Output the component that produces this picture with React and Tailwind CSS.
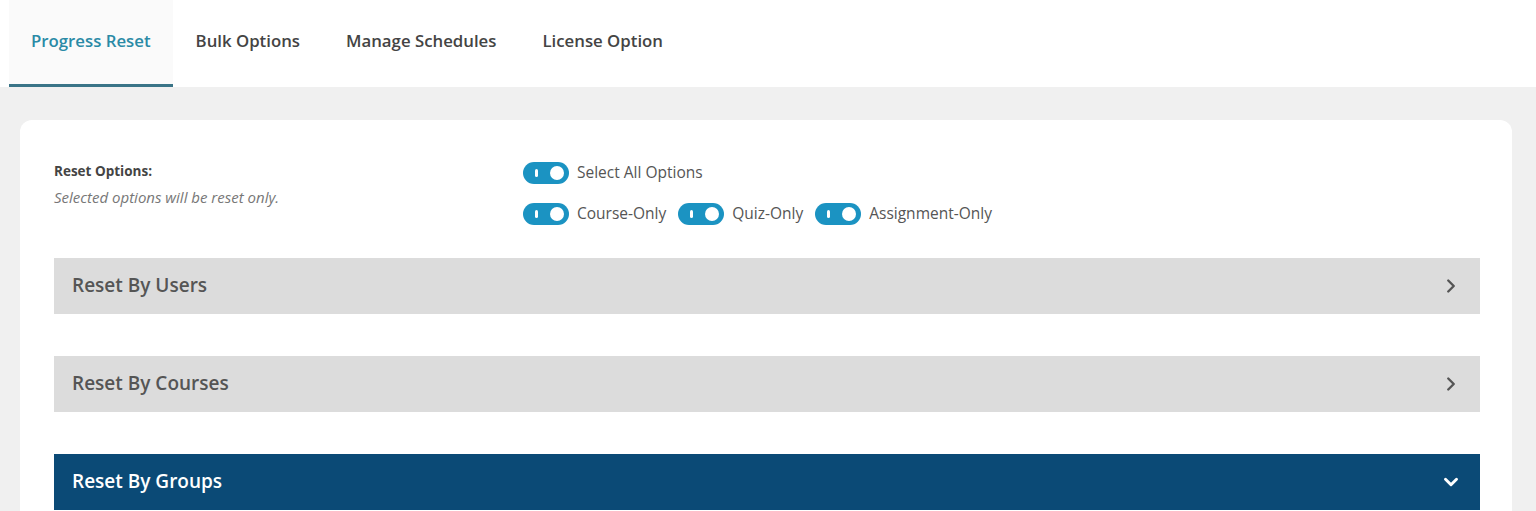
import { ChevronRight, ChevronDown } from 'lucide-react';

const tabs = ['Progress Reset', 'Bulk Options', 'Manage Schedules', 'License Option'];

function Toggle() {
  return (
    <span className="relative inline-flex items-center w-[46px] h-[22px] rounded-full bg-[#1b93c2] shrink-0">
      <span className="absolute left-[12px] top-[7px] w-[3px] h-[8px] rounded-sm bg-white" />
      <span className="absolute right-[5px] top-[4px] w-[14px] h-[14px] rounded-full bg-white" />
    </span>
  );
}

function Option({ label }) {
  return (
    <label className="flex items-center gap-[8px] text-[15.5px] text-[#555]">
      <Toggle />
      <span>{label}</span>
    </label>
  );
}

function Section({ title, open }) {
  return (
    <div
      className={
        open
          ? 'h-[56px] flex items-center justify-between pl-[18px] pr-[18px] bg-[#0b4a76] text-white'
          : 'h-[56px] flex items-center justify-between pl-[18px] pr-[18px] bg-[#dcdcdc] text-[#555]'
      }
    >
      <span className="text-[19px] font-semibold">{title}</span>
      {open ? (
        <ChevronDown className="w-[22px] h-[22px]" strokeWidth={3.2} />
      ) : (
        <ChevronRight className="w-[22px] h-[22px]" strokeWidth={2.6} />
      )}
    </div>
  );
}

export default function App() {
  return (
    <div className="min-h-screen bg-[#f0f0f0] font-['Open_Sans',sans-serif]">
      <div className="bg-white h-[87px] flex items-stretch pl-[9px]">
        {tabs.map((t, i) => (
          <div
            key={t}
            className={
              i === 0
                ? 'px-[22px] flex items-center bg-[#fafafa] border-b-[3px] border-[#3a7487] text-[#2a8aa6] text-[16.8px] font-semibold pb-[2px]'
                : 'px-[23px] flex items-center text-[#444] text-[16.8px] font-semibold pb-[2px] border-b-[3px] border-transparent'
            }
          >
            {t}
          </div>
        ))}
      </div>

      <div className="mt-[33px] ml-[20px] mr-[24px] bg-white rounded-[12px] pt-[41px] pl-[34px] pr-[32px] pb-[20px]">
        <div className="flex">
          <div className="w-[469px]">
            <div className="text-[13.5px] font-bold text-[#444] leading-[20px]">Reset Options:</div>
            <div className="text-[15px] italic text-[#777] leading-[20px] mt-[6px]">
              Selected options will be reset only.
            </div>
          </div>
          <div className="flex flex-col gap-[18px]">
            <Option label="Select All Options" />
            <div className="flex items-center gap-[12px]">
              <Option label="Course-Only" />
              <Option label="Quiz-Only" />
              <Option label="Assignment-Only" />
            </div>
          </div>
        </div>

        <div className="mt-[32px] flex flex-col gap-[42px]">
          <Section title="Reset By Users" />
          <Section title="Reset By Courses" />
          <Section title="Reset By Groups" open />
        </div>
      </div>
    </div>
  );
}
